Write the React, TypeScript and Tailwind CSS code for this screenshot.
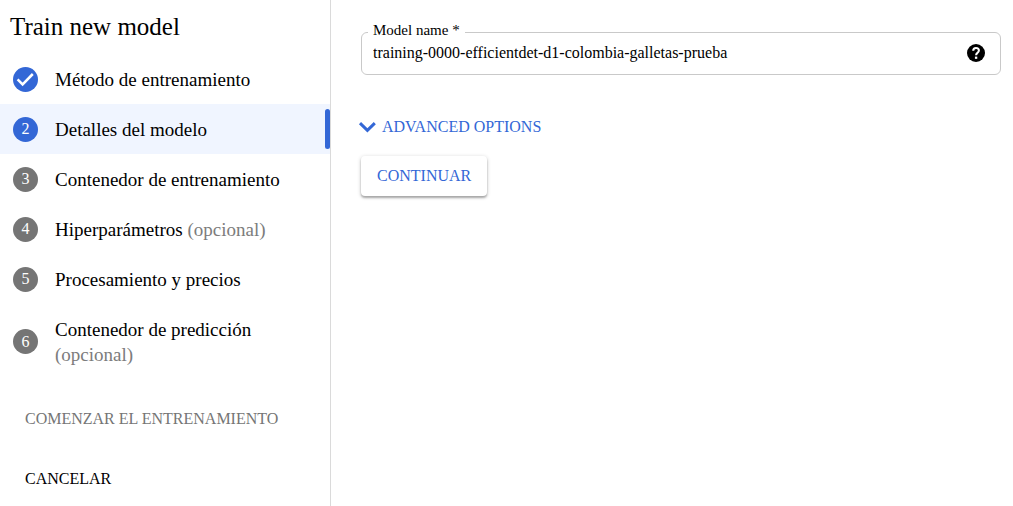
import { useState } from "react";

type Step = { label: string; optional?: boolean; done?: boolean; active?: boolean };

const steps: Step[] = [
  { label: "Método de entrenamiento", done: true },
  { label: "Detalles del modelo", active: true },
  { label: "Contenedor de entrenamiento" },
  { label: "Hiperparámetros", optional: true },
  { label: "Procesamiento y precios" },
  { label: "Contenedor de predicción", optional: true },
];

function StepItem({ step, index }: { step: Step; index: number }) {
  const blue = step.done || step.active;
  return (
    <li className={`flex ${step.active ? "bg-[#f0f5ff]" : ""}`}>
      <button
        type="button"
        aria-current={step.active ? "step" : undefined}
        className="flex grow items-center gap-[17px] py-3 pr-12 pl-[13px] text-left text-[19px] leading-[25px]"
      >
        <span
          className={`flex size-[25px] shrink-0 items-center justify-center rounded-full text-base text-white ${blue ? "bg-[#3367d6]" : "bg-[#757575]"}`}
        >
          {step.done ? (
            <svg viewBox="0 0 25 25" className="size-[25px]" fill="none" stroke="currentColor" strokeWidth="2.5">
              <path d="M4.6 12.4l5 5L19.8 7" />
            </svg>
          ) : (
            index + 1
          )}
        </span>
        <span className="pt-px">
          {step.label}
          {step.optional && <span className="text-[#7c7c7c]"> (opcional)</span>}
        </span>
      </button>
      {step.active && <span className="my-[5px] w-[5px] shrink-0 rounded-sm bg-[#3367d6]" />}
    </li>
  );
}

export default function App() {
  const [name, setName] = useState("training-0000-efficientdet-d1-colombia-galletas-prueba");
  return (
    <div className="flex min-h-screen bg-white font-['Liberation_Serif',serif] text-black">
      <aside className="w-[331px] shrink-0 border-r border-[#dadada]">
        <h1 className="p-[10px] text-[25px] leading-[34px]">Train new model</h1>
        <ol>
          {steps.map((step, i) => (
            <StepItem key={step.label} step={step} index={i} />
          ))}
        </ol>
        <div className="flex flex-col items-start gap-9 px-[25px] pt-7 text-base leading-6">
          <button type="button" disabled className="text-[#757575]">
            COMENZAR EL ENTRENAMIENTO
          </button>
          <button type="button">CANCELAR</button>
        </div>
      </aside>
      <main className="flex grow flex-col items-start pt-5 pr-3 pl-[30px]">
        <fieldset className="flex w-full items-center rounded-md border border-[#c9c9c9] pr-[15px] pb-3 pl-[6px]">
          <legend className="px-[5px] pb-1 text-[15px] leading-5">
            <label htmlFor="model-name" className="block">Model name *</label>
          </legend>
          <input
            id="model-name"
            value={name}
            onChange={(e) => setName(e.target.value)}
            className="min-w-0 grow px-[5px] text-base leading-[18px] outline-none"
          />
          <button type="button" aria-label="Help" className="shrink-0">
            <svg viewBox="0 0 20 20" className="size-[18px]" fill="none">
              <circle cx="10" cy="10" r="10" fill="black" />
              <path d="M6.9 7.6C6.9 5.6 8.2 4.5 10 4.5s3.2 1.1 3.2 2.8c0 2.4-3.1 2.5-3.1 5.2" stroke="white" strokeWidth="2.3" />
              <path d="M8.8 14h2.6v2.5H8.8z" fill="white" />
            </svg>
          </button>
        </fieldset>
        <button type="button" className="mt-10 flex items-center gap-[5px] text-base leading-6 text-[#3367d6]">
          <svg viewBox="0 0 16 16" className="size-4 overflow-visible" fill="none" stroke="currentColor" strokeWidth="3">
            <path d="M-1 4.2l7.4 7.2 7.4-7.2" />
          </svg>
          ADVANCED OPTIONS
        </button>
        <button
          type="button"
          className="mt-[17px] rounded px-4 py-2 text-base leading-6 text-[#3367d6] shadow-[0_2px_2px_rgba(0,0,0,0.25),0_1px_4px_rgba(0,0,0,0.2)]"
        >
          CONTINUAR
        </button>
      </main>
    </div>
  );
}
